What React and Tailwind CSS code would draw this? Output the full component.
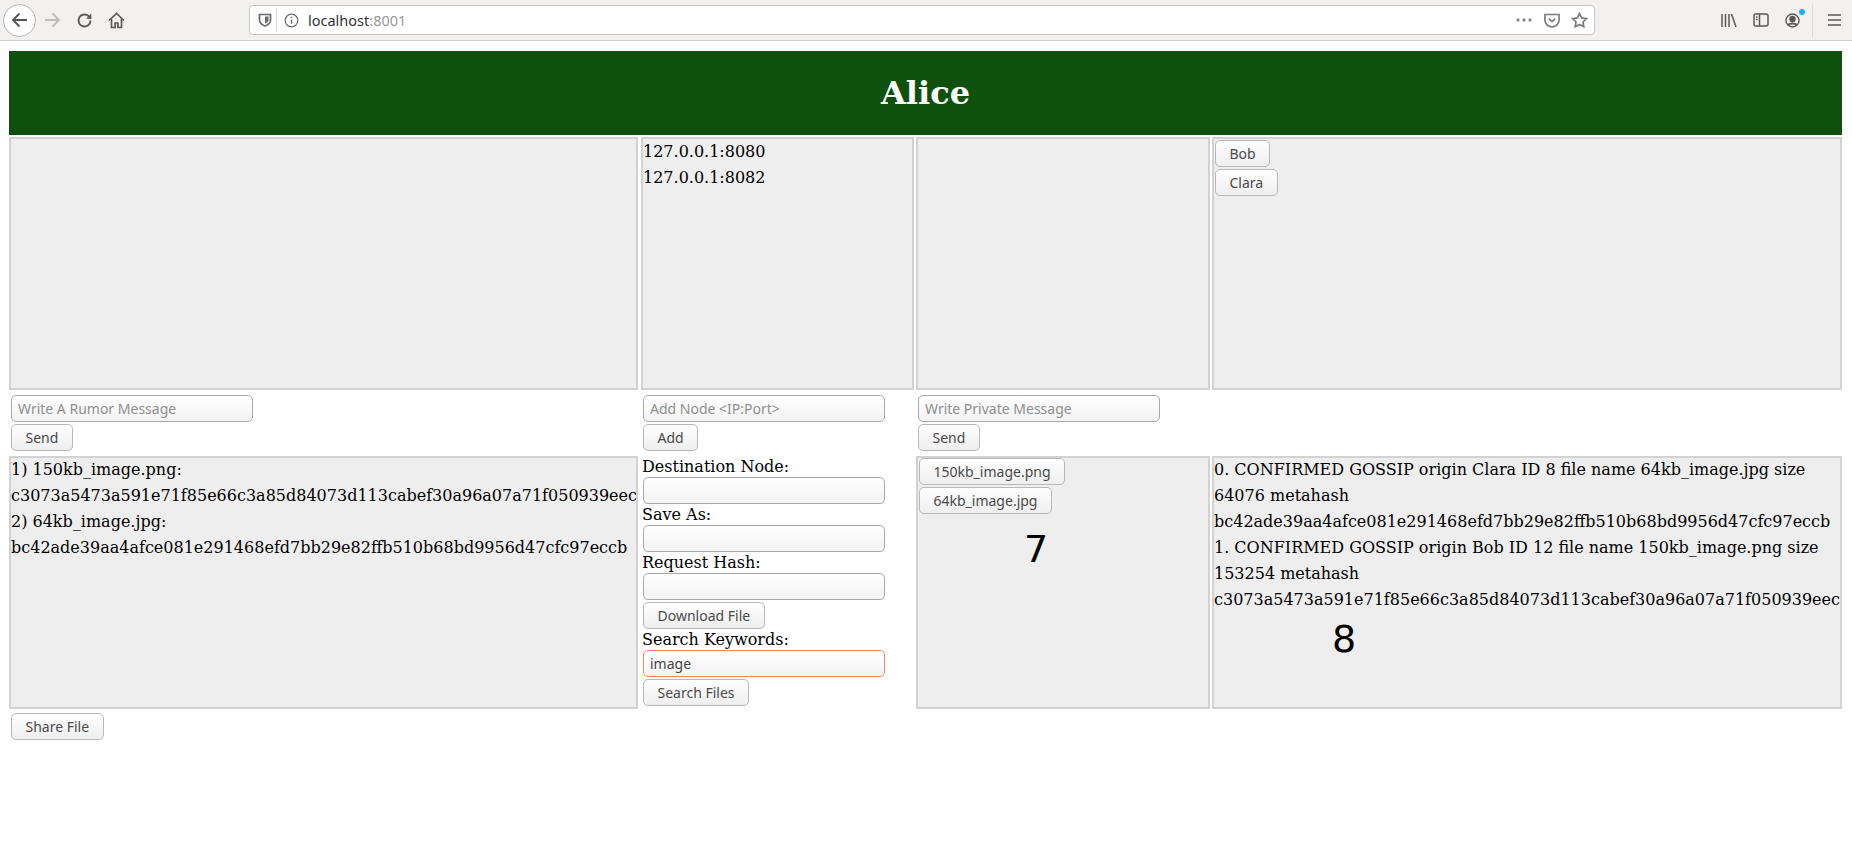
import { Fragment } from "react";

const Btn = ({ children, className = "" }) => (
  <button
    type="button"
    className={`block h-[27px] rounded-[5px] border border-[#b8b8b8] bg-gradient-to-b from-white to-[#eeeeee] px-[13.5px] font-['Noto_Sans'] text-[14px] leading-[25px] text-[#4a4a4a] ${className}`}
  >
    {children}
  </button>
);

const Field = ({ placeholder, value, className = "border-[#a8a8a8]" }) => (
  <input
    type="text"
    readOnly
    placeholder={placeholder}
    value={value}
    className={`block h-[27px] w-[242px] rounded-[5px] border bg-gradient-to-b from-white to-[#f3f3f3] px-[6px] font-['Noto_Sans'] text-[14px] text-[#444] outline-none placeholder:text-[#8f8f8f] ${className}`}
  />
);

const Panel = ({ className = "", children }) => (
  <div className={`relative h-[253px] border-2 border-[#d2d2d2] bg-[#eeeeee] ${className}`}>
    {children}
  </div>
);

const Toolbar = () => (
  <div className="flex h-[41px] items-center border-b border-[#cdcdcd] bg-[#f2f1f0] text-[#5a5a5a]">
    <div className="ml-[3px] flex h-[33px] w-[33px] items-center justify-center rounded-full border border-[#b5b5b5] bg-white">
      <svg width="18" height="18" viewBox="0 0 18 18" fill="none" stroke="#555" strokeWidth="1.8">
        <path d="M16 9H2M8.500 2.500 2 9l6.500 6.500" />
      </svg>
    </div>
    <svg className="ml-[7px]" width="18" height="18" viewBox="0 0 18 18" fill="none" stroke="#bdbdbd" strokeWidth="1.8">
      <path d="M2 9h14M9.500 2.500 16 9l-6.500 6.500" />
    </svg>
    <svg className="ml-[15px]" width="17" height="17" viewBox="0 0 17 17" fill="none" stroke="#5a5a5a" strokeWidth="1.9">
      <path d="M14.500 8.500a6 6 0 1 1-1.800-4.300L15 6.500" />
      <path d="M15.300 1.500v5.300H10" fill="#5a5a5a" stroke="none" />
    </svg>
    <svg className="ml-[15px]" width="17" height="17" viewBox="0 0 17 17" fill="none" stroke="#5a5a5a" strokeWidth="1.7">
      <path d="M1 8.500 8.500 1.500 16 8.500" />
      <path d="M3.500 7v8.500h3.600v-4.500h2.800v4.500h3.600V7" />
    </svg>

    <div className="ml-[124px] flex h-[30px] w-[1346px] items-center rounded-[4px] border border-[#c8c8c8] bg-white">
      <svg className="ml-[7px]" width="16" height="16" viewBox="0 0 16 16" fill="none" stroke="#6a6a6a" strokeWidth="1.7">
        <path d="M2.500 2.500h11v5.500c0 3-2.500 5-5.500 6-3-1-5.500-3-5.500-6z" />
        <path d="M8 4.500h3.500V8c0 1.700-1.500 2.800-3.500 3.500z" fill="#6a6a6a" stroke="none" />
      </svg>
      <div className="ml-[3px] h-[24px] w-px bg-[#d8d8d8]" />
      <svg className="ml-[7px]" width="15" height="15" viewBox="0 0 15 15" fill="none" stroke="#6a6a6a" strokeWidth="1.2">
        <circle cx="7.500" cy="7.500" r="6.300" />
        <path d="M7.500 6.800v4M7.500 3.800v1.400" strokeWidth="1.500" />
      </svg>
      <span className="ml-[9px] font-['Noto_Sans'] text-[14.5px] text-[#333]">
        localhost<span className="text-[#999]">:8001</span>
      </span>
      <div className="ml-auto flex items-center">
        <svg width="16" height="4" viewBox="0 0 16 4" fill="#8a8a8a">
          <circle cx="2" cy="2" r="1.700" />
          <circle cx="8" cy="2" r="1.700" />
          <circle cx="14" cy="2" r="1.700" />
        </svg>
        <svg className="ml-[12px]" width="16" height="15" viewBox="0 0 16 15" fill="none" stroke="#7a7a7a" strokeWidth="1.700">
          <path d="M1 1.500h14v5.500a7 7 0 0 1-14 0z" />
          <path d="M4.800 5.500 8 8.500l3.200-3" />
        </svg>
        <svg className="mr-[6px] ml-[11px]" width="17" height="17" viewBox="0 0 17 17" fill="none" stroke="#7a7a7a" strokeWidth="1.700">
          <path d="m8.500 1.500 2.100 4.400 4.900.7-3.500 3.400.8 4.800-4.300-2.300-4.300 2.300.8-4.800L1.500 6.600l4.900-.7z" />
        </svg>
      </div>
    </div>

    <div className="ml-[126px] flex items-center">
      <svg width="16" height="15" viewBox="0 0 16 15" fill="none" stroke="#5a5a5a" strokeWidth="1.500">
        <path d="M1 1v13M4.500 1v13M8 1v13M10.500 1l4.500 13" />
      </svg>
      <svg className="ml-[16px]" width="16" height="14" viewBox="0 0 16 14" fill="none" stroke="#5a5a5a" strokeWidth="1.500">
        <rect x="1" y="1" width="14" height="12" rx="2" />
        <path d="M6.500 1v12M3 4h1.500M3 6.500h1.500" />
      </svg>
      <div className="relative ml-[16px]">
        <svg className="block" width="15" height="15" viewBox="0 0 15 15" fill="none" stroke="#5a5a5a" strokeWidth="1.400">
          <circle cx="7.500" cy="7.500" r="6.500" />
          <circle cx="7.500" cy="6" r="2.500" fill="#5a5a5a" />
          <path d="M3.500 12c1-2 7-2 8 0" strokeWidth="2" />
        </svg>
        <span className="absolute -top-[4px] -right-[5px] h-[6px] w-[6px] rounded-full bg-[#1fb0f5]" />
      </div>
      <div className="ml-[12px] h-[33px] w-px bg-[#dcdcdc]" />
      <svg className="ml-[15px]" width="13" height="12" viewBox="0 0 13 12" fill="none" stroke="#5a5a5a" strokeWidth="1.600">
        <path d="M0 1h13M0 6h13M0 11h13" />
      </svg>
    </div>
  </div>
);

const Label = ({ children }) => <div className="-ml-[1px] h-[21px] leading-[22px]">{children}</div>;

export default function App() {
  return (
    <div className="min-h-[862px] bg-white font-['DejaVu_Serif',serif] text-[16px] leading-[26px] text-black">
      <Toolbar />
      <div className="pt-[10px] pr-[10px] pl-[9px]">
        <div className="flex h-[84px] items-center justify-center bg-[#0e500e] text-[32px] font-bold text-white">
          Alice
        </div>

        <div className="mt-[2px] flex gap-[2px]">
          <Panel className="mr-[1px] w-[629px]" />
          <Panel className="w-[273px]">
            <div>127.0.0.1:8080</div>
            <div>127.0.0.1:8082</div>
          </Panel>
          <Panel className="w-[294px]" />
          <Panel className="w-[630px] pt-[1px] pl-[1px]">
            <Btn>Bob</Btn>
            <Btn className="mt-[2px]">Clara</Btn>
          </Panel>
        </div>

        <div className="mt-[5px] flex h-[61px] gap-[2px]">
          <div className="w-[630px] pl-[2px]">
            <Field placeholder="Write A Rumor Message" />
            <Btn className="mt-[2px]">Send</Btn>
          </div>
          <div className="w-[273px] pl-[2px]">
            <Field placeholder="Add Node <IP:Port>" />
            <Btn className="mt-[2px]">Add</Btn>
          </div>
          <div className="w-[294px] pl-[2px]">
            <Field placeholder="Write Private Message" />
            <Btn className="mt-[2px]">Send</Btn>
          </div>
        </div>

        <div className="flex items-start gap-[2px]">
          <Panel className="mr-[1px] w-[629px] overflow-hidden whitespace-nowrap">
            <div className="-mt-[1px]">1) 150kb_image.png:</div>
            <div>c3073a5473a591e71f85e66c3a85d84073d113cabef30a96a07a71f050939eec</div>
            <div>2) 64kb_image.jpg:</div>
            <div>bc42ade39aa4afce081e291468efd7bb29e82ffb510b68bd9956d47cfc97eccb</div>
          </Panel>
          <div className="w-[273px] pl-[2px]">
            {[
              ["Destination Node:", ""],
              ["Save As:", ""],
              ["Request Hash:", ""],
            ].map(([label, value]) => (
              <Fragment key={label}>
                <Label>{label}</Label>
                <Field value={value} />
              </Fragment>
            ))}
            <Btn className="mt-[2px]">Download File</Btn>
            <Label>Search Keywords:</Label>
            <Field value="image" className="border-[#ee8a68]" />
            <Btn className="mt-[2px]">Search Files</Btn>
          </div>
          <Panel className="w-[294px] pl-[1px]">
            <Btn>150kb_image.png</Btn>
            <Btn className="mt-[2px]">64kb_image.jpg</Btn>
            <span className="absolute top-[68px] left-[106px] font-['DejaVu_Sans'] text-[38px] leading-[46px]">7</span>
          </Panel>
          <Panel className="w-[630px]">
            <div className="-mt-[1px]">0. CONFIRMED GOSSIP origin Clara ID 8 file name 64kb_image.jpg size 64076 metahash</div>
            <div>bc42ade39aa4afce081e291468efd7bb29e82ffb510b68bd9956d47cfc97eccb</div>
            <div>1. CONFIRMED GOSSIP origin Bob ID 12 file name 150kb_image.png size 153254 metahash</div>
            <div className="whitespace-nowrap">c3073a5473a591e71f85e66c3a85d84073d113cabef30a96a07a71f050939eec</div>
            <span className="absolute top-[158px] left-[118px] font-['DejaVu_Sans'] text-[38px] leading-[46px]">8</span>
          </Panel>
        </div>

        <div className="pt-[4px] pl-[2px]">
          <Btn>Share File</Btn>
        </div>
      </div>
    </div>
  );
}
